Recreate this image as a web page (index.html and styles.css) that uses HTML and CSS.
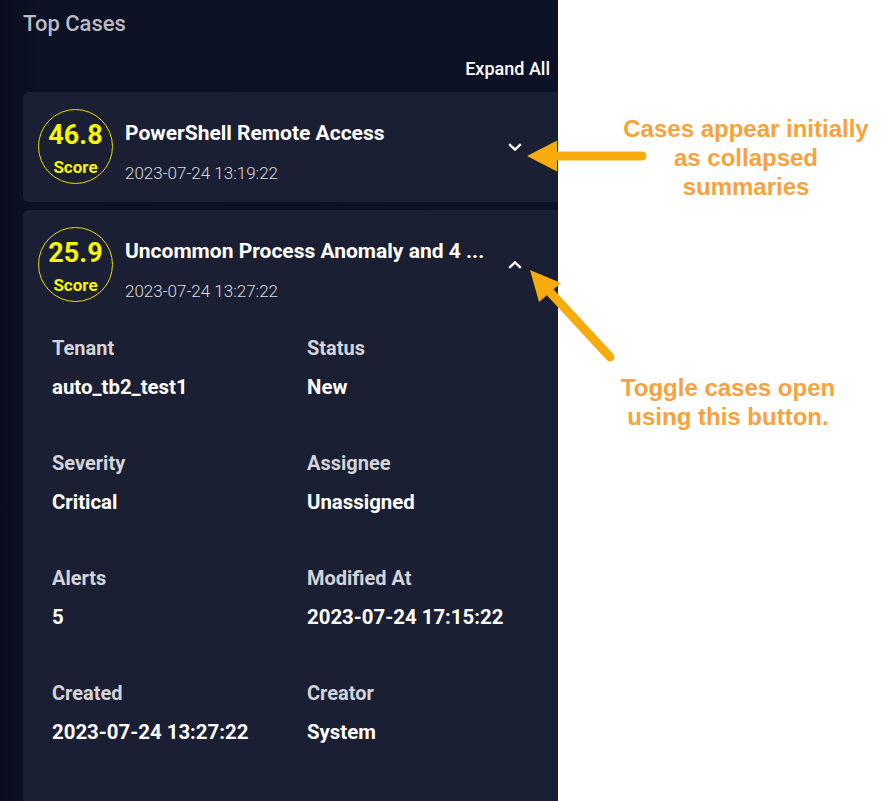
FILE: index.html
```html
<!DOCTYPE html>
<html lang="en">
  <head>
    <meta charset="utf-8">
    <title>Top Cases</title>
    <link rel="stylesheet" href="styles.css">
  </head>
  <body>
    <div class="page">
      <div class="panel">
        <div class="panel-title">Top Cases</div>
        <div class="toolbar">
          <a class="expand" href="#">Expand All</a>
        </div>

        <div class="case">
          <div class="case-head">
            <div class="score">
              <span class="score-value">46.8</span>
              <span class="score-label">Score</span>
            </div>
            <div class="case-info">
              <div class="case-name">PowerShell Remote Access</div>
              <div class="case-date">2023-07-24 13:19:22</div>
            </div>
            <button class="toggle" title="expand">
              <svg width="14" height="8" viewBox="0 0 14 8"><path d="M1.2 1.2 L7 6.6 L12.8 1.2" /></svg>
            </button>
          </div>
        </div>

        <div class="case case-open">
          <div class="case-head">
            <div class="score">
              <span class="score-value">25.9</span>
              <span class="score-label">Score</span>
            </div>
            <div class="case-info">
              <div class="case-name">Uncommon Process Anomaly and 4 ...</div>
              <div class="case-date">2023-07-24 13:27:22</div>
            </div>
            <button class="toggle" title="collapse">
              <svg width="14" height="8" viewBox="0 0 14 8"><path d="M1.2 6.8 L7 1.4 L12.8 6.8" /></svg>
            </button>
          </div>
          <div class="details">
            <div class="field">
              <div class="label">Tenant</div>
              <div class="value">auto_tb2_test1</div>
            </div>
            <div class="field">
              <div class="label">Status</div>
              <div class="value">New</div>
            </div>
            <div class="field">
              <div class="label">Severity</div>
              <div class="value">Critical</div>
            </div>
            <div class="field">
              <div class="label">Assignee</div>
              <div class="value">Unassigned</div>
            </div>
            <div class="field">
              <div class="label">Alerts</div>
              <div class="value">5</div>
            </div>
            <div class="field">
              <div class="label">Modified At</div>
              <div class="value">2023-07-24 17:15:22</div>
            </div>
            <div class="field">
              <div class="label">Created</div>
              <div class="value">2023-07-24 13:27:22</div>
            </div>
            <div class="field">
              <div class="label">Creator</div>
              <div class="value">System</div>
            </div>
          </div>
        </div>
      </div>

      <div class="notes">
        <p class="note note-first">Cases appear initially<br />as collapsed<br />summaries</p>
        <p class="note note-second">Toggle cases open<br />using this button.</p>
      </div>
    </div>

    <!-- callout arrows drawn over the screenshot -->
    <svg class="arrows" width="884" height="801" viewBox="0 0 884 801">
      <line x1="552" y1="156" x2="642" y2="156" />
      <polygon points="527,156 557,140.5 557,171.5" />
      <line x1="549" y1="291" x2="610" y2="357" />
      <polygon points="530,270 561,283 539,302" />
    </svg>
  </body>
</html>
```

FILE: styles.css
```css
body {
  background-color: #ffffff;
  color: #ffffff;
  font-family: Roboto, "Liberation Sans", Arial, sans-serif;
  margin: 0px;
  padding: 0px;
}
.page {
  display: flex;
  width: 884px;
  height: 801px;
  overflow: hidden;
}
.panel {
  flex: none;
  width: 535px;
  height: 801px;
  padding: 11px 0px 0px 23px;
  background: linear-gradient(to right, #0a0d1f 0px, #0d1125 40px, #0e1227 100%);
  overflow: hidden;
}
.panel-title {
  color: #b9bac2;
  font-size: 22px;
  font-weight: 500;
  line-height: 26px;
}
.toolbar {
  display: flex;
  justify-content: flex-end;
  padding-right: 8px;
  margin-top: 21px;
}
.expand {
  color: #ffffff;
  font-size: 18px;
  font-weight: 500;
  line-height: 22px;
  text-decoration: none;
}
.case {
  background-color: #1b1f33;
  border-radius: 6px 0px 0px 6px;
  margin-top: 12px;
  padding: 17px 31px 18px 15px;
}
.case + .case {
  margin-top: 8px;
}
.case-open {
  padding-bottom: 120px;
}
.case-head {
  display: flex;
  align-items: center;
}
.score {
  flex: none;
  width: 73px;
  height: 73px;
  border: 1px solid #e6dc00;
  border-radius: 50%;
  display: flex;
  flex-direction: column;
  align-items: center;
  color: #f6f600;
  font-weight: 700;
}
.score-value {
  font-size: 27px;
  line-height: 32px;
  margin-top: 9px;
}
.score-label {
  font-size: 17px;
  line-height: 20px;
  margin-top: 6px;
}
.case-info {
  flex: 1;
  min-width: 0;
  margin-left: 12px;
  padding-top: 11px;
}
.case-name {
  font-size: 21px;
  font-weight: 700;
  line-height: 24px;
  white-space: nowrap;
  overflow: hidden;
  text-overflow: ellipsis;
}
.case-date {
  color: #d8d9de;
  font-size: 17px;
  font-weight: 300;
  line-height: 20px;
  margin-top: 18px;
}
.toggle {
  flex: none;
  width: 24px;
  height: 24px;
  margin-left: 12px;
  padding: 0px;
  border: 0px;
  background: none;
  display: flex;
  align-items: center;
  justify-content: center;
}
.toggle path {
  fill: none;
  stroke: #ffffff;
  stroke-width: 2.4;
}
.details {
  display: grid;
  grid-template-columns: 255px 1fr;
  row-gap: 52px;
  padding: 34px 0px 0px 14px;
}
.label {
  color: #d3d4d9;
  font-size: 20px;
  font-weight: 700;
  line-height: 24px;
}
.value {
  color: #ffffff;
  font-size: 20.4px;
  font-weight: 700;
  line-height: 24px;
  margin-top: 15px;
}
.notes {
  flex: 1;
  padding-top: 114px;
}
.note {
  margin: 0px;
  color: #f8a23e;
  font-family: "Liberation Sans", Arial, sans-serif;
  font-size: 24px;
  font-weight: bold;
  line-height: 29px;
  text-align: center;
}
.note-first {
  padding-left: 50px;
}
.note-second {
  padding-left: 14px;
  margin-top: 172px;
}
.arrows {
  position: absolute;
  left: 0px;
  top: 0px;
  pointer-events: none;
}
.arrows line {
  stroke: #f8ab0c;
  stroke-width: 9;
  stroke-linecap: round;
}
.arrows polygon {
  fill: #f8ab0c;
}
```
